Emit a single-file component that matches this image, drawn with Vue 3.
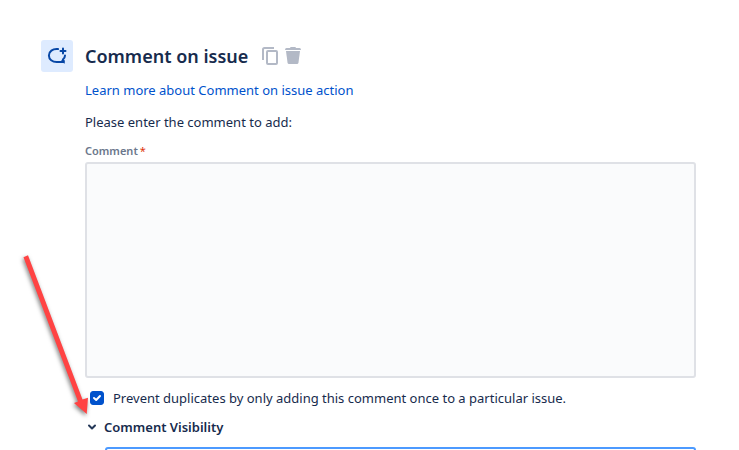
<script setup>
import { ref } from 'vue'

const comment = ref('')
const preventDuplicates = ref(true)
const visibility = ref('')
const open = ref(true)
</script>

<template>
  <main class="page">
    <span class="badge">
      <svg width="32" height="32" viewBox="0 0 32 32" fill="none" stroke="#0747a6" stroke-width="2" aria-hidden="true">
        <path d="M17 9.100C11.500 8.500 7.900 11.600 7.900 15.500C7.900 19.400 11.400 22 15.700 22H22.800L21.900 19.600C23.300 18.300 24 17 24 15.500" stroke-linecap="round" stroke-linejoin="round" />
        <path d="M22 8.500V13.500M19.500 11H24.500" stroke-linecap="round" />
        <path d="M20 20H23.500V24Z" fill="#0747a6" stroke="none" />
      </svg>
    </span>

    <form class="content" @submit.prevent>
      <header class="heading">
        <h1>Comment on issue</h1>
        <button type="button" class="tool" aria-label="Duplicate">
          <svg width="16" height="18" viewBox="0 0 16 18" fill="none" stroke="#b3b9c6" stroke-width="2" aria-hidden="true">
            <path d="M1 13V2.500Q1 1 2.500 1H12" />
            <rect x="5" y="4" width="10" height="13" rx="1" />
          </svg>
        </button>
        <button type="button" class="tool" aria-label="Delete">
          <svg width="16" height="18" viewBox="0 0 16 18" fill="#b3b9c6" aria-hidden="true">
            <path d="M0 3Q0 1 1.500 1H5Q5.200 0 6 0H10Q10.800 0 11 1H14.500Q16 1 16 3Z" />
            <path d="M1 4H15L13.500 15.500Q13.300 17 12 17H4Q2.700 17 2.500 15.500Z" />
          </svg>
        </button>
      </header>

      <a class="learn" href="#">Learn more about Comment on issue action</a>
      <p class="intro">Please enter the comment to add:</p>

      <label class="caption" for="comment">Comment<span class="required">*</span></label>
      <textarea id="comment" v-model="comment" class="comment"></textarea>

      <label class="check">
        <input v-model="preventDuplicates" type="checkbox" />
        <svg class="tick" width="14" height="14" viewBox="0 0 14 14" fill="none" stroke="#fff" stroke-width="2" aria-hidden="true">
          <path d="M4 7L6.200 9L10 5" stroke-linecap="round" stroke-linejoin="round" />
        </svg>
        <span>Prevent duplicates by only adding this comment once to a particular issue.</span>
      </label>

      <button type="button" class="toggle" :aria-expanded="open" @click="open = !open">
        <svg width="10" height="8" viewBox="0 0 10 8" fill="none" stroke="#253858" stroke-width="2" aria-hidden="true">
          <path d="M2 2.500L5 5.500L8 2.500" stroke-linecap="round" stroke-linejoin="round" />
        </svg>
        <span>Comment Visibility</span>
      </button>

      <select v-if="open" v-model="visibility" class="visibility" aria-label="Comment Visibility">
        <option value=""></option>
      </select>
    </form>

    <svg class="arrow" width="80" height="180" viewBox="0 0 80 180" aria-hidden="true">
      <path d="M7.500 14.300L12 12.300L66.500 156.500L72 154.700L70.700 171L58 160L62 158.500Z" fill="#ff4343" />
    </svg>
  </main>
</template>

<style>
body {
  margin: 0;
  background: #fff;
}
</style>

<style scoped>
.page {
  position: relative;
  box-sizing: border-box;
  display: flex;
  align-items: flex-start;
  gap: 12px;
  height: 100vh;
  overflow: hidden;
  padding: 40px 43px 0 41px;
  color: #172b4d;
  font-family: "Noto Sans", "Open Sans", sans-serif;
  font-size: 13px;
  line-height: 20px;
}

.badge {
  flex: none;
  display: flex;
  border-radius: 3px;
  background: #deebff;
}

.content {
  flex: 1;
  min-width: 0;
  display: flex;
  flex-direction: column;
  align-items: flex-start;
}

.heading {
  display: flex;
  align-items: center;
  gap: 7px;
  height: 32px;
}

h1 {
  margin: 0 7px 0 0;
  font-size: 18px;
  font-weight: 600;
  line-height: 32px;
}

button {
  display: flex;
  align-items: center;
  padding: 0;
  border: 0;
  background: none;
  color: inherit;
  font: inherit;
  cursor: pointer;
}

.learn {
  margin-top: 8px;
  color: #0052cc;
  text-decoration: none;
}

.intro {
  margin: 12px 0 0;
}

.caption {
  margin-top: 9px;
  margin-bottom: 1px;
  color: #6b778c;
  font-size: 11px;
  font-weight: 600;
}

.required {
  padding-left: 2px;
  color: #de350b;
  font-weight: 400;
}

.comment {
  box-sizing: border-box;
  width: 100%;
  height: 216px;
  padding: 8px;
  border: 2px solid #dfe1e6;
  border-radius: 3px;
  outline: 0;
  background: #fafbfc;
  color: inherit;
  font: inherit;
  resize: none;
}

.check {
  display: grid;
  grid-template-columns: 14px auto;
  align-items: center;
  column-gap: 9px;
  margin: 10px 0 0 5px;
}

.check input {
  grid-area: 1 / 1;
  appearance: none;
  width: 14px;
  height: 14px;
  margin: 0;
  border: 1px solid #dfe1e6;
  border-radius: 3px;
}

.check input:checked {
  border-color: #0052cc;
  background: #0052cc;
}

.tick {
  grid-area: 1 / 1;
  pointer-events: none;
}

.check input:not(:checked) + .tick {
  visibility: hidden;
}

.toggle {
  gap: 7px;
  margin: 9px 0 0 2px;
  font-weight: 600;
}

.visibility {
  flex: none;
  box-sizing: border-box;
  align-self: stretch;
  height: 40px;
  margin: 10px 0 0 20px;
  border: 2px solid #4c9aff;
  border-radius: 3px;
  outline: 0;
  background: #fff;
  color: inherit;
  font: inherit;
  appearance: none;
}

.arrow {
  position: absolute;
  top: 243px;
  left: 16px;
  overflow: visible;
  filter: drop-shadow(-1px 2px 2px rgba(0, 0, 0, 0.5));
  pointer-events: none;
}
</style>
